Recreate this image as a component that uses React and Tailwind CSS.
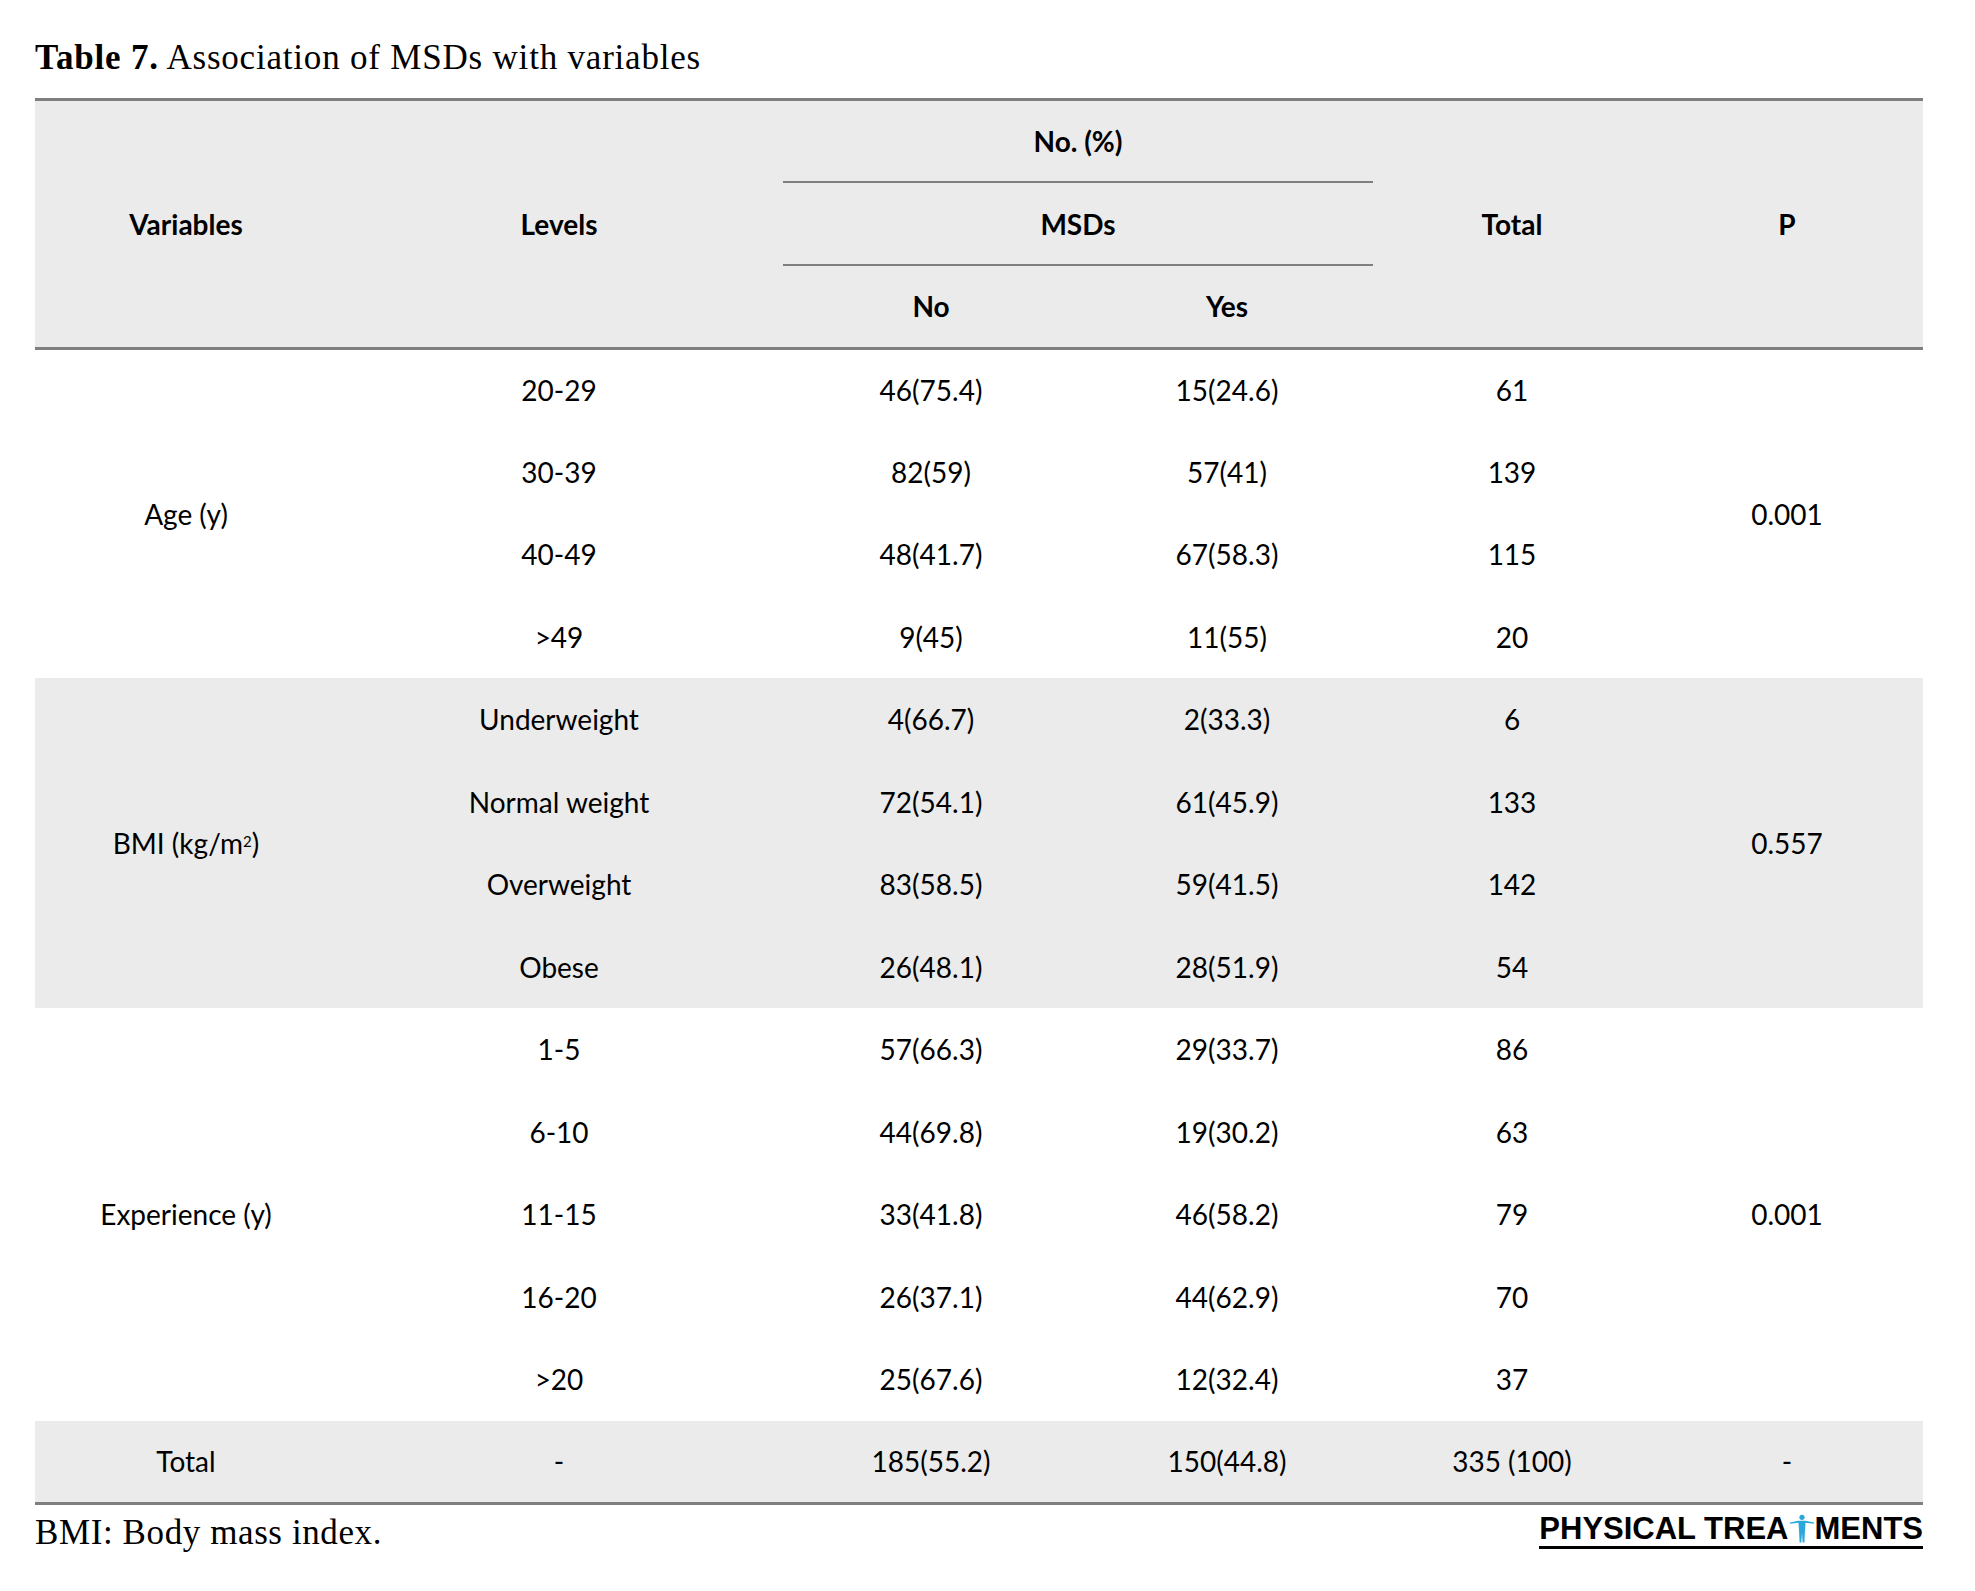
import React from "react"

const bodyFont = { fontFamily: "Lato, 'Open Sans', sans-serif" }
const serifFont = { fontFamily: "'Liberation Serif', 'DejaVu Serif', serif" }

const groups = [
  {
    name: "Age (y)",
    p: "0.001",
    shaded: false,
    rows: [
      ["20-29", "46(75.4)", "15(24.6)", "61"],
      ["30-39", "82(59)", "57(41)", "139"],
      ["40-49", "48(41.7)", "67(58.3)", "115"],
      [">49", "9(45)", "11(55)", "20"],
    ],
  },
  {
    name: "BMI",
    p: "0.557",
    shaded: true,
    rows: [
      ["Underweight", "4(66.7)", "2(33.3)", "6"],
      ["Normal weight", "72(54.1)", "61(45.9)", "133"],
      ["Overweight", "83(58.5)", "59(41.5)", "142"],
      ["Obese", "26(48.1)", "28(51.9)", "54"],
    ],
  },
  {
    name: "Experience (y)",
    p: "0.001",
    shaded: false,
    rows: [
      ["1-5", "57(66.3)", "29(33.7)", "86"],
      ["6-10", "44(69.8)", "19(30.2)", "63"],
      ["11-15", "33(41.8)", "46(58.2)", "79"],
      ["16-20", "26(37.1)", "44(62.9)", "70"],
      [">20", "25(67.6)", "12(32.4)", "37"],
    ],
  },
]

// little blue person standing in for the "T"
const Figure = () => (
  <svg width="26" height="31" viewBox="0 0 28 30" className="-mb-[1px]">
    <circle cx="14" cy="3" r="2.8" fill="#2aa8dc" />
    <path
      d="M1 8.6 L10 6.6 L18 6.6 L27 8.6 L27 9.8 L17.8 8.9 L17.2 17.5 L16.6 30 L14.7 30 L14 19.5 L13.3 30 L11.4 30 L10.8 17.5 L10.2 8.9 L1 9.8 Z"
      fill="#2aa8dc"
    />
  </svg>
)

export default function App() {
  return (
    <div className="w-[1975px] h-[1591px] bg-white pl-[35px] pt-[38px]">
      <h1 className="text-[35px] leading-[40px] text-black mb-[20px] tracking-[0.8px]" style={serifFont}>
        <span className="font-bold">Table 7.</span> Association of MSDs with variables
      </h1>

      <table className="w-[1888px] table-fixed border-collapse text-[28px] text-black" style={bodyFont}>
        <colgroup>
          <col className="w-[302px]" />
          <col className="w-[444px]" />
          <col className="w-[300px]" />
          <col className="w-[292px]" />
          <col className="w-[278px]" />
          <col className="w-[272px]" />
        </colgroup>
        <thead className="bg-[#ebebeb] font-bold border-t-[3px] border-b-[3px] border-[#7f7f7f]">
          <tr className="h-[82px]">
            <th rowSpan={3} className="text-center">Variables</th>
            <th rowSpan={3} className="text-center">Levels</th>
            <th colSpan={2} className="p-0 align-bottom">
              <div className="h-[82px] flex items-center justify-center border-b-2 border-[#7f7f7f] ml-[2px]">No. (%)</div>
            </th>
            <th rowSpan={3} className="text-center">Total</th>
            <th rowSpan={3} className="text-center">P</th>
          </tr>
          <tr className="h-[83px]">
            <th colSpan={2} className="p-0">
              <div className="h-[83px] flex items-center justify-center border-b-2 border-[#7f7f7f] ml-[2px]">MSDs</div>
            </th>
          </tr>
          <tr className="h-[82px]">
            <th className="text-center">No</th>
            <th className="text-center">Yes</th>
          </tr>
        </thead>
        <tbody>
          {groups.map((g) =>
            g.rows.map((r, i) => (
              <tr key={g.name + r[0]} className={"h-[82.5px] " + (g.shaded ? "bg-[#ebebeb]" : "")}>
                {i === 0 && (
                  <td rowSpan={g.rows.length} className="text-center">
                    {g.name === "BMI" ? (
                      <span>
                        BMI (kg/m<sup className="text-[15px]">2</sup>)
                      </span>
                    ) : (
                      g.name
                    )}
                  </td>
                )}
                <td className="text-center">{r[0]}</td>
                <td className="text-center">{r[1]}</td>
                <td className="text-center">{r[2]}</td>
                <td className="text-center">{r[3]}</td>
                {i === 0 && (
                  <td rowSpan={g.rows.length} className="text-center">
                    {g.p}
                  </td>
                )}
              </tr>
            ))
          )}
          <tr className="h-[82.5px] bg-[#ebebeb] border-b-[3px] border-[#7f7f7f]">
            <td className="text-center">Total</td>
            <td className="text-center">-</td>
            <td className="text-center">185(55.2)</td>
            <td className="text-center">150(44.8)</td>
            <td className="text-center">335 (100)</td>
            <td className="text-center">-</td>
          </tr>
        </tbody>
      </table>

      <div className="flex justify-between items-start w-[1888px] mt-[8px]">
        <p className="text-[35px] leading-[40px] text-black tracking-[0.6px]" style={serifFont}>
          BMI: Body mass index.
        </p>
        <div
          className="flex items-end border-b-[3px] border-black pb-[3px] text-[31px] leading-[29px] font-bold text-black"
          style={{ fontFamily: "'Liberation Sans', Arial, sans-serif" }}
        >
          <span>PHYSICAL TREA</span>
          <Figure />
          <span>MENTS</span>
        </div>
      </div>
    </div>
  )
}
